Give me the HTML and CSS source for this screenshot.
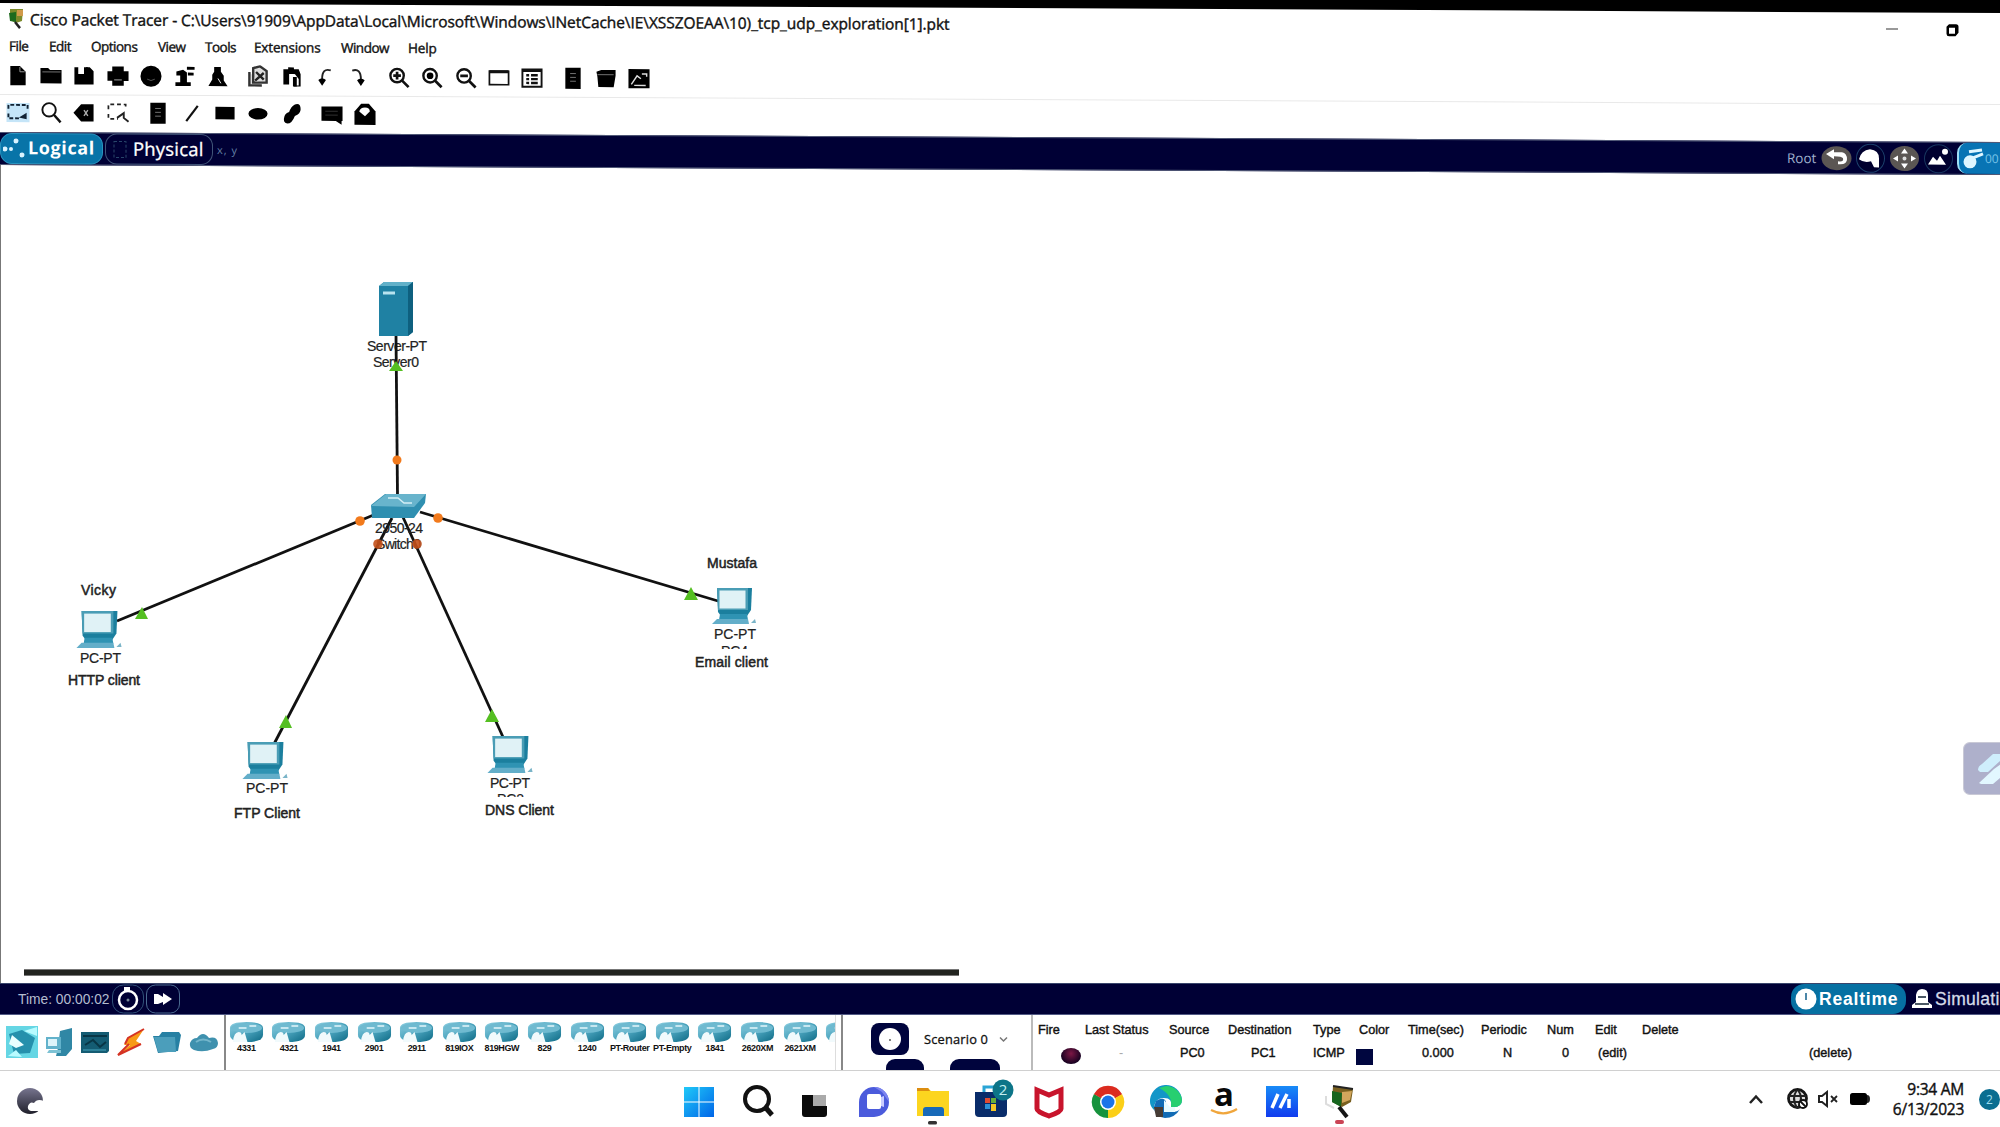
FILE: index.html
```html
<!DOCTYPE html>
<html lang="en">
<head>
<meta charset="utf-8">
<title>Cisco Packet Tracer</title>
<link rel="stylesheet" href="styles.css">
</head>
<body>
<svg class="defs" width="0" height="0">
  <defs>
    <linearGradient id="teal" x1="0" x2="1" y1="0" y2="1"><stop offset="0" stop-color="#8fd0e2"/><stop offset=".5" stop-color="#4aa3bd"/><stop offset="1" stop-color="#0d6a85"/></linearGradient>
    <symbol id="router" viewBox="0 0 36 22" preserveAspectRatio="none"><path d="M1 7Q1 1 18 1T35 7V14Q35 21 18 21T1 14Z" fill="url(#teal)"/><ellipse cx="18" cy="7" rx="16" ry="5" fill="#6fbad0"/><path d="M4 21Q5 11 10 11Q13 11 13 14L16 11L19 21Z" fill="#f1fafc"/><path d="M10 7H18M21 5H28" stroke="#e5f6fa" stroke-width="1.5"/></symbol>
    <symbol id="pc" viewBox="0 0 46 40"><path d="M6 2H41L40 24L36 30H10L7 26Z" fill="#1b7f9e"/><path d="M6 2H37V24H7Z" fill="#4a9db5"/><rect x="8.500" y="4.500" width="26" height="18" fill="#e0f2f6"/><path d="M9 28H36L37 34H8Z" fill="#2f93b3"/><path d="M6 33H37L38 38H1Z" fill="#63aec9"/><path d="M40 37L44 33L45 37Z" fill="#7ab4c8"/></symbol>
  </defs>
</svg>

<header class="head">
  <div class="titlebar">
    <svg class="applogo" width="16" height="22" viewBox="0 0 16 22"><path d="M2 1H15L14 13L8 15L2 12Z" fill="#7c8a2a"/><path d="M1 5L8 4V14L2 13Z" fill="#1d6a1d"/><path d="M9 2H15V8H9Z" fill="#d09a4a"/><path d="M7 14L12 20" stroke="#222" stroke-width="2.5"/></svg>
    <span class="title">Cisco Packet Tracer - C:\Users\91909\AppData\Local\Microsoft\Windows\INetCache\IE\XSSZOEAA\10)_tcp_udp_exploration[1].pkt</span>
    <span class="winbtns">
      <svg width="14" height="14" viewBox="0 0 14 14"><path d="M1 5.500H13" stroke="#777" stroke-width="1.500"/></svg>
      <svg width="15" height="15" viewBox="0 0 15 15"><path d="M4 1.500H11Q13.500 1.500 13.500 4V10L10.500 13.500H4Q1.500 13.500 1.500 11V4Z" fill="#000"/><rect x="4" y="5" width="6" height="6" fill="#fff"/></svg>
    </span>
  </div>
  <nav class="menu"><span class="m1">File</span><span class="m2">Edit</span><span class="m3">Options</span><span class="m4">View</span><span class="m5">Tools</span><span class="m6">Extensions</span><span class="m7">Window</span><span class="m8">Help</span></nav>
  <div class="tools tools-main">
    <div class="group">
      <svg viewBox="0 0 24 24"><path d="M4 2H14L20 8V22H4Z"/><path d="M14 3V8H19" stroke="#999" fill="none"/></svg>
      <svg viewBox="0 0 24 24"><path d="M1 4H9L11 6H23V20H1Z"/><path d="M3 8H22" stroke="#777"/></svg>
      <svg viewBox="0 0 24 24"><path d="M2 3H6V10H12V3H18L22 7V21H2Z"/><path d="M14 3H16V8H14Z"/></svg>
      <svg viewBox="0 0 24 24"><path d="M6 2H18V7H23V17H18V22H6V17H1V7H6Z"/><path d="M8 16H16" stroke="#aaa"/></svg>
      <svg viewBox="0 0 24 24"><circle cx="12" cy="12" r="11"/><path d="M8 15Q12 18 16 15" stroke="#555" fill="none"/></svg>
      <svg viewBox="0 0 24 24"><path d="M3 7L10 5L14 8V18H18V22H2V18H7V11L3 11ZM14 2H22V5H14ZM15 8H21V11H15Z"/></svg>
      <svg viewBox="0 0 24 24"><path d="M8 2H15V7L18 11V16L22 22H2L6 15V10L8 7Z"/><path d="M12 14L15 19" stroke="#fff"/></svg>
    </div>
    <div class="group">
      <svg viewBox="0 0 24 24"><path d="M7 3L14 1L21 6V18H7ZM3 7V21H16" fill="#ddd" stroke="#333" stroke-width="2.500"/><path d="M10 7L18 15M18 8L9 16" stroke="#222" stroke-width="2.500"/></svg>
      <svg viewBox="0 0 24 24"><path d="M3 4H8V2H14V4H19L21 9V22H14V9H9V20H3Z"/><path d="M10 10L15 9L19 14V21H10Z" fill="#fff"/><path d="M13 12H17V22H13Z"/></svg>
      <svg viewBox="0 0 24 24"><path d="M18 5Q9 2 9 14" fill="none" stroke="#222" stroke-width="2"/><path d="M5 15Q9 12 13 15L9 21Z"/></svg>
      <svg viewBox="0 0 24 24"><path d="M6 5Q15 2 15 14" fill="none" stroke="#222" stroke-width="2"/><path d="M11 15Q15 12 19 15L15 21Z"/></svg>
    </div>
    <div class="group">
      <svg viewBox="0 0 24 24"><circle cx="10" cy="10" r="7" fill="none" stroke="#111" stroke-width="2.500"/><path d="M15 15L22 22M10 6V14M6 10H14" stroke="#111" stroke-width="2.800"/></svg>
      <svg viewBox="0 0 24 24"><circle cx="10" cy="10" r="7" fill="none" stroke="#111" stroke-width="2.500"/><path d="M15 15L22 22" stroke="#111" stroke-width="2.800"/><circle cx="10" cy="10" r="3.500"/></svg>
      <svg viewBox="0 0 24 24"><circle cx="10" cy="10" r="7" fill="none" stroke="#111" stroke-width="2.500"/><path d="M15 15L22 22M6 10H14" stroke="#111" stroke-width="2.800"/></svg>
      <svg viewBox="0 0 24 24"><path d="M2 5H22V19H2Z" fill="none" stroke="#111" stroke-width="1.800"/><path d="M2 5.500H22" stroke="#111" stroke-width="3"/></svg>
      <svg viewBox="0 0 24 24"><path d="M2 3H22V21H2Z" fill="none" stroke="#111" stroke-width="2"/><path d="M2 4H22" stroke="#111" stroke-width="3"/><path d="M6 9H9M6 13H9M6 17H9M11 9H18M11 13H18M11 17H18" stroke="#111" stroke-width="2.500"/></svg>
    </div>
    <div class="group">
      <svg viewBox="0 0 24 24"><path d="M4 1H20V23H4Z"/><path d="M9 7H15M9 11H15M9 15H15" stroke="#777"/></svg>
      <svg viewBox="0 0 24 24"><path d="M2 5L7 3H22V9L20 21H4L3 10Z"/><path d="M3 8H20" stroke="#777"/></svg>
      <svg viewBox="0 0 24 24"><path d="M1 2H23V22H1Z"/><path d="M4 18L10 9L14 12M15 7H20V10M7 19H19" fill="none" stroke="#ddd" stroke-width="1.500"/></svg>
    </div>
  </div>
  <div class="tools tools-draw">
    <div class="group">
      <svg viewBox="0 0 24 24"><rect x="0" y="2" width="24" height="20" fill="#c5e5f8"/><path d="M2 8V4H22V8M2 13V18H14" fill="none" stroke="#123" stroke-width="2" stroke-dasharray="4 2"/><path d="M13 17L21 12V19Z" fill="#123"/></svg>
      <svg viewBox="0 0 24 24"><circle cx="10" cy="9" r="7" fill="none" stroke="#111" stroke-width="2"/><path d="M15 14L22 22" stroke="#111" stroke-width="2.500"/></svg>
      <svg viewBox="0 0 24 24"><path d="M1 12L9 3H22V21H9Z"/><path d="M12 9L16 15M16 9L12 15" stroke="#aaa" stroke-width="1.500"/></svg>
      <svg viewBox="0 0 24 24"><path d="M2 8V3H20V8M2 13V18H12" fill="none" stroke="#222" stroke-width="1.800" stroke-dasharray="4 3"/><path d="M11 17L18 12V17L23 21" fill="none" stroke="#222" stroke-width="2"/></svg>
    </div>
    <div class="group">
      <svg viewBox="0 0 24 24"><path d="M4 1H20V23H4Z"/><path d="M9 7H15M9 11H15M9 15H15" stroke="#777"/></svg>
      <svg viewBox="0 0 24 24"><path d="M6 20L18 4" stroke="#111" stroke-width="2.300"/></svg>
      <svg viewBox="0 0 24 24"><rect x="2" y="5" width="20" height="13"/></svg>
      <svg viewBox="0 0 24 24"><ellipse cx="12" cy="12" rx="10" ry="6"/></svg>
      <svg viewBox="0 0 24 24"><path d="M15 2Q21 0 21 7Q21 12 15 14Q12 22 7 22Q2 21 4 15Q5 11 9 10Q11 4 15 2Z"/></svg>
    </div>
    <div class="group">
      <svg viewBox="0 0 24 24"><path d="M1 4H23V19H22V23L16 19H1Z"/><path d="M5 9H18M5 13H18" stroke="#333"/></svg>
      <svg viewBox="0 0 24 24"><path d="M1 9L8 1H16L23 9V23H1Z"/><path d="M6 9Q7 5 12 5Q17 5 17 9L12 14Z" fill="#fff"/></svg>
    </div>
  </div>
  <div class="viewbar">
    <div class="pill logical"><svg width="22" height="24" viewBox="0 0 22 24"><g fill="#d9f3ff"><circle cx="2" cy="12" r="2.500"/><circle cx="8" cy="12" r="2"/><circle cx="13" cy="4" r="2.500"/><circle cx="19" cy="18" r="2.500"/></g></svg><span>Logical</span></div>
    <div class="pill physical"><svg width="14" height="20" viewBox="0 0 14 20"><path d="M1 2H13V18H1Z" fill="none" stroke="#28466a" stroke-dasharray="3 2"/></svg><span>Physical</span></div>
    <span class="coords">x, y</span>
    <div class="viewtools">
      <span class="root">Root</span>
      <svg width="31" height="28" viewBox="0 0 31 28"><ellipse cx="15.500" cy="14" rx="15" ry="12" fill="#5b5653"/><path d="M5 10L13 5V8H21Q26 9 26 15Q26 21 17 20V17Q23 18 22 14Q21 12 13 12V15Z" fill="#fff"/></svg>
      <svg width="33" height="30" viewBox="0 0 33 30"><circle cx="16.500" cy="15" r="14" fill="#00002f" stroke="#1b406c"/><path d="M5 16Q7 7 16 6Q25 7 25 15V24H20L17 18Q10 20 5 16Z" fill="#fff"/></svg>
      <svg width="31" height="28" viewBox="0 0 31 28"><ellipse cx="15.500" cy="14" rx="14.500" ry="12.500" fill="#5b5653"/><path d="M15.500 4L19 9H12ZM15.500 24L12 19H19ZM4 14L9 11V17ZM27 14L22 11V17Z" fill="#fff"/><circle cx="15.500" cy="14" r="2" fill="#ddd"/></svg>
      <svg width="33" height="30" viewBox="0 0 33 30"><circle cx="16.500" cy="15" r="14" fill="#00002f" stroke="#173660"/><path d="M6 21L11 13L15 17L18 12L24 21Z" fill="#fff"/><circle cx="23" cy="8" r="3" fill="#fff"/></svg>
      <div class="clock"><svg width="24" height="26" viewBox="0 0 24 26"><circle cx="9" cy="16" r="6.500" fill="#dff6ff"/><path d="M8 6L21 4M12 12L22 8" stroke="#dff6ff" stroke-width="3"/></svg><span>00</span></div>
    </div>
  </div>
</header>

<main class="workspace">
  <svg class="topology" width="2000" height="818" viewBox="0 165 2000 818">
    <g stroke="#111" stroke-width="2.800" fill="none">
      <path d="M117 621L376 514"/><path d="M274 744L392 518"/><path d="M503 737L402 515"/><path d="M718 601L420 512"/>
    </g>
    <path d="M379 286L384 282H413V332L408 336H379Z" fill="#1f81a3"/><path d="M379 286L384 282H413L408 286Z" fill="#62b1c9"/><path d="M408 286L413 282V332L408 336Z" fill="#0e607f"/><path d="M383 293H395" stroke="#b8e3ef" stroke-width="3"/>
    <g class="label">
      <text x="367" y="351" textLength="60">Server-PT</text><text x="373" y="367" textLength="46">Server0</text>
      <text x="375" y="533" textLength="48">2950-24</text><text x="376" y="549" textLength="45">Switch0</text>
    </g>
    <path d="M396 336L397.500 496" stroke="#111" stroke-width="2.800"/>
    <path d="M371 505L385 494H426L425 503L414 518H372Z" fill="#2f8fb0"/><path d="M371 506L386 494H426L414 507Z" fill="#68b4cc"/><path d="M388 498H398L404 503H412" stroke="#d3eef5" stroke-width="1.500" fill="none"/>
    <g fill="#f27a1c"><circle cx="397" cy="460" r="4.500"/><circle cx="360" cy="521" r="4.800"/><circle cx="438" cy="518" r="4.800"/></g>
    <g fill="#c4501a" opacity=".9"><circle cx="378" cy="544" r="4.800"/><circle cx="417" cy="544" r="4.800"/></g>
    <g fill="#55bf22"><path d="M396 361L403 371H389Z"/><path d="M142 607L148 619H135Z"/><path d="M286 715L292 728H279Z"/><path d="M492 709L499 722H485Z"/><path d="M691 587L698 600H684Z"/></g>
    <use href="#pc" x="75" y="609" width="48" height="41"/><use href="#pc" x="241" y="740" width="48" height="41"/><use href="#pc" x="486" y="734" width="48" height="41"/><use href="#pc" x="710" y="586" width="48" height="40"/>
    <g class="label">
      <text x="80" y="663" textLength="41">PC-PT</text><text x="246" y="793" textLength="42">PC-PT</text><text x="490" y="788" textLength="40">PC-PT</text><text x="714" y="639" textLength="42">PC-PT</text>
    </g>
    <svg x="490" y="793" width="40" height="4"><text class="label" x="7" y="11" textLength="27">PC2</text></svg>
    <svg x="714" y="645" width="40" height="4"><text class="label" x="7" y="11" textLength="27">PC4</text></svg>
    <g class="label note">
      <text x="81" y="595" textLength="35">Vicky</text><text x="68" y="685" textLength="72">HTTP client</text><text x="234" y="818" textLength="66">FTP Client</text><text x="485" y="815" textLength="69">DNS Client</text><text x="707" y="568" textLength="50">Mustafa</text><text x="695" y="667" textLength="73">Email client</text>
    </g>
  </svg>
  <div class="scroll"></div>
  <div class="floater"><svg width="37" height="53" viewBox="0 0 37 53"><path d="M14 27Q14 23 18 21L29 11H37V17L24 29H16Z" fill="#cfeefc"/><path d="M15 40L30 26L37 21V34L29 41H17Z" fill="#e2f7ff"/></svg></div>
</main>

<div class="timebar">
  <span class="time">Time: 00:00:02</span>
  <svg width="32" height="30" viewBox="0 0 32 30"><rect x=".5" y="1" width="31" height="28" rx="11" fill="none" stroke="#2f5078"/><circle cx="16" cy="16" r="9" fill="none" stroke="#fff" stroke-width="2.500"/><path d="M12 3H18V7H12Z" fill="#fff"/><circle cx="16" cy="16" r="1.500" fill="#789"/></svg>
  <svg width="34" height="30" viewBox="0 0 34 30"><rect x=".5" y="1" width="33" height="28" rx="9" fill="none" stroke="#4a6a90"/><path d="M8 10H12L17 13V9L26 15L17 21V18L12 20H8Z" fill="#fff"/></svg>
  <div class="modes">
    <div class="realtime"><svg width="22" height="24" viewBox="0 0 22 24"><circle cx="11" cy="12" r="10.500" fill="#fff"/><path d="M11 6V13" stroke="#4c87a8" stroke-width="2"/></svg><span>Realtime</span></div>
    <div class="simulation"><svg width="22" height="24" viewBox="0 0 22 24"><path d="M5 15V8Q6 2 11 2Q17 2 17 8V15L21 18V21H1V18Z" fill="#fff"/><path d="M7 10H15M4 17H18" stroke="#123" stroke-width="1.500"/></svg><span>Simulation</span></div>
  </div>
</div>

<div class="dock">
  <div class="cats">
    <svg width="32" height="32" viewBox="0 0 32 32"><path d="M0 0H32V32H0Z" fill="#65d6e4"/><path d="M3 8L16 4L29 12L24 27L8 28Z" fill="#2590ac"/><path d="M3 18L6 9L18 19L10 22Z" fill="#eaffff"/><path d="M18 5L31 1V10ZM2 30L10 24L16 31Z" fill="#b8fbff"/></svg>
    <svg width="30" height="32" viewBox="0 0 30 32"><path d="M16 5L28 2V23L22 30H12L14 22Z" fill="#3087a5"/><path d="M2 11H17V23H2Z" fill="#62b2cb"/><path d="M4 13H13V20H4Z" fill="#ddf4fa"/><path d="M5 24H17V27H3Z" fill="#7dc2d4"/></svg>
    <svg width="30" height="26" viewBox="0 0 30 26"><path d="M1 3H29V22L27 24H1Z" fill="#145c73"/><path d="M3 7H27M5 16L13 11L20 18L26 13" stroke="#083646" stroke-width="2" fill="none"/><path d="M3 21H26" stroke="#2d8199" stroke-width="2"/></svg>
    <svg width="30" height="30" viewBox="0 0 30 30"><path d="M28 2L13 10L8 18H14L2 28L25 17L20 14Z" fill="#f89a16"/><path d="M28 2L12 11L9 17M25 17L2 28L13 17" fill="none" stroke="#d53324" stroke-width="2"/></svg>
    <svg width="30" height="26" viewBox="0 0 30 26"><path d="M1 7H7L10 3H27L29 6L26 22L6 24Z" fill="#2680a3"/><path d="M2 8H23L24 23H6Z" fill="#4b9ebb"/></svg>
    <svg width="32" height="24" viewBox="0 0 32 24"><path d="M6 20Q1 18 2 13Q4 8 9 8Q15 0 21 8Q29 6 30 13Q30 18 25 19Q15 23 6 20Z" fill="#3f91ae"/><path d="M8 12Q15 7 23 12" stroke="#74b6cb" stroke-width="2" fill="none"/></svg>
  </div>
  <div class="models">
    <div><svg><use href="#router"/></svg><b>4331</b></div><div><svg><use href="#router"/></svg><b>4321</b></div><div><svg><use href="#router"/></svg><b>1941</b></div><div><svg><use href="#router"/></svg><b>2901</b></div><div><svg><use href="#router"/></svg><b>2911</b></div><div><svg><use href="#router"/></svg><b>819IOX</b></div><div><svg><use href="#router"/></svg><b>819HGW</b></div><div><svg><use href="#router"/></svg><b>829</b></div><div><svg><use href="#router"/></svg><b>1240</b></div><div><svg><use href="#router"/></svg><b>PT-Router</b></div><div><svg><use href="#router"/></svg><b>PT-Empty</b></div><div><svg><use href="#router"/></svg><b>1841</b></div><div><svg><use href="#router"/></svg><b>2620XM</b></div><div><svg><use href="#router"/></svg><b>2621XM</b></div><div><svg><use href="#router"/></svg></div>
  </div>
  <div class="scenario">
    <div class="scenario-top">
      <svg width="38" height="32" viewBox="0 0 38 32"><rect width="38" height="32" rx="8" fill="#00043d"/><ellipse cx="19" cy="16" rx="11" ry="11" fill="#fff"/><circle cx="19" cy="17" r="1" fill="#555"/></svg>
      <span class="scenario-name">Scenario 0</span>
      <svg width="9" height="7" viewBox="0 0 9 7"><path d="M1 1.500L4.500 5L8 1.500" stroke="#777" stroke-width="1.500" fill="none"/></svg>
    </div>
    <div class="scenario-btns"><i class="b1"></i><i class="b2"></i></div>
  </div>
  <div class="pdu">
    <div class="row"><span>Fire</span><span>Last Status</span><span>Source</span><span>Destination</span><span>Type</span><span>Color</span><span>Time(sec)</span><span>Periodic</span><span>Num</span><span>Edit</span><span>Delete</span></div>
    <div class="row values"><span><i class="fire"></i></span><span class="dash">-</span><span>PC0</span><span>PC1</span><span>ICMP</span><span><i class="swatch"></i></span><span>0.000</span><span>N</span><span>0</span><span>(edit)</span><span>(delete)</span></div>
  </div>
</div>

<footer class="taskbar">
  <svg class="weather" width="28" height="28" viewBox="0 0 28 28"><defs><linearGradient id="moon" x1="0" x2="0" y1="0" y2="1"><stop offset="0" stop-color="#77758f"/><stop offset="1" stop-color="#20202b"/></linearGradient></defs><circle cx="14" cy="14" r="13" fill="url(#moon)"/><path d="M12 19Q14 14 18 16Q21 11 28 14V24H15Q11 23 12 19Z" fill="#fff"/></svg>
  <div class="apps">
    <svg viewBox="0 0 40 50"><defs><linearGradient id="win" x1="0" x2="1" y1="0" y2="1"><stop offset="0" stop-color="#20c9f8"/><stop offset="1" stop-color="#0065e8"/></linearGradient></defs><path d="M5 9H19.500V23.500H5ZM20.500 9H35V23.500H20.500ZM5 24.500H19.500V39H5ZM20.500 24.500H35V39H20.500Z" fill="url(#win)"/></svg>
    <svg viewBox="0 0 40 50"><circle cx="20" cy="21" r="12" fill="none" stroke="#111" stroke-width="4"/><path d="M29 30L35 37" stroke="#111" stroke-width="5"/></svg>
    <svg viewBox="0 0 40 50"><path d="M17 17H30V30H17Z" fill="#aaa"/><path d="M6 17H17V28H31V36Q31 39 28 39H9Q6 39 6 36Z" fill="#0b0b0b"/></svg>
    <svg viewBox="0 0 40 50"><path d="M5 39V24A15 15 0 1 1 20 39Z" fill="#4b5bdc"/><path d="M20 9A15 15 0 0 1 35 24L28 14Z" fill="#7c84f0"/><rect x="13" y="16" width="14" height="15" rx="2" fill="#fff"/><path d="M27 19L30 18V29L27 28Z" fill="#c9ccff"/></svg>
    <svg viewBox="0 0 40 50"><path d="M4 10H15L18 13H36V38H4Z" fill="#fcd51f"/><path d="M4 10H15L17 13H4Z" fill="#dc8d10"/><path d="M10 38V32Q10 29 13 29H28Q31 29 31 32V38Z" fill="#1769b8"/><rect x="15" y="43" width="9" height="3.500" rx="1.500" fill="#333"/></svg>
    <svg viewBox="0 0 40 50"><path d="M13 16V9H27V16" fill="none" stroke="#2aa5d6" stroke-width="3"/><path d="M4 14H36V35Q36 39 32 39H8Q4 39 4 35Z" fill="#092c6a"/><path d="M14 20H19V25H14Z" fill="#e14b31"/><path d="M20 20H25V25H20Z" fill="#69ae3b"/><path d="M14 26H19V31H14Z" fill="#2b90d7"/><path d="M20 26H25V33H20Z" fill="#f5c624"/><circle cx="32" cy="12" r="10.500" fill="#0d7588"/><text x="32" y="17" text-anchor="middle" class="badge">2</text></svg>
    <svg viewBox="0 0 40 50"><path d="M8 12L20 17L32 12V31Q32 34 20 38Q8 34 8 31Z" fill="none" stroke="#c8142c" stroke-width="5"/></svg>
    <svg viewBox="0 0 40 50"><path d="M20 24L6 16A16 16 0 0 1 34 16Z" fill="#db2b1f"/><path d="M20 24L34 16A16 16 0 0 1 20 40Z" fill="#fbcf17"/><path d="M20 24V40A16 16 0 0 1 6 16Z" fill="#16923d"/><path d="M6 16H34L20 24Z" fill="#db2b1f"/><circle cx="20" cy="24" r="8" fill="#fff"/><circle cx="20" cy="24" r="6.500" fill="#1a73e8"/></svg>
    <svg viewBox="0 0 40 50"><path d="M4 24A16 16 0 0 1 36 22Q36 30 25 29Q27 20 18 20Q8 20 8 32Q4 28 4 24Z" fill="#1296c8"/><path d="M20 8A16 16 0 0 1 36 22Q36 30 25 29Q27 17 13 10Z" fill="#27cf70"/><path d="M10 23Q18 18 20 24Q17 32 26 34Q32 34 34 31Q29 40 19 40Q8 38 8 29Z" fill="#116bb5"/><path d="M8 29H17V39H10Z" fill="#463c35"/><path d="M18 22L24 29H29V34H18Z" fill="#e8fbff"/></svg>
    <svg viewBox="0 0 40 50"><text x="19" y="28" text-anchor="middle" class="amazon">a</text><path d="M6 32Q19 39 32 31" stroke="#f0a63c" stroke-width="2.200" fill="none"/></svg>
    <svg viewBox="0 0 40 50"><defs><linearGradient id="mm" x1="0" x2="0" y1="0" y2="1"><stop offset="0" stop-color="#188bf7"/><stop offset="1" stop-color="#113bee"/></linearGradient></defs><path d="M3 8H35V39H3Z" fill="url(#mm)"/><path d="M9 30L15 16M17 30L24 16M26 21V30" stroke="#fff" stroke-width="3.500"/></svg>
    <svg viewBox="0 0 40 50"><path d="M12 8L32 11L30 24L21 29L11 24Z" fill="#796020"/><path d="M11 13L21 15L20 29L11 24Z" fill="#16651f"/><path d="M21 14L31 13L29 22L21 25Z" fill="#d2a65c"/><path d="M12 8L32 11" stroke="#222" stroke-width="2"/><path d="M5 18V26L13 30" stroke="#ddd" stroke-width="2" fill="none"/><path d="M18 29L26 39" stroke="#161616" stroke-width="4"/><rect x="14" y="42" width="9" height="4" rx="2" fill="#ca4354"/></svg>
  </div>
  <div class="tray">
    <svg class="t-up" width="16" height="12" viewBox="0 0 16 12"><path d="M2 10L8 3.500L14 10" stroke="#222" stroke-width="2.500" fill="none"/></svg>
    <svg class="t-net" width="22" height="22" viewBox="0 0 22 22"><circle cx="10.500" cy="10.500" r="9" fill="#ddd" stroke="#151515" stroke-width="2.800"/><path d="M2 8H19M3 14H18M10 2Q4 10 10 20M11 2Q17 10 11 20" stroke="#222" stroke-width="2" fill="none"/><circle cx="16" cy="16" r="4" fill="#fff" stroke="#111" stroke-width="1.800"/><path d="M13 13L19 19" stroke="#111" stroke-width="1.800"/></svg>
    <svg class="t-vol" width="22" height="18" viewBox="0 0 22 18"><path d="M2 6H5L10 2V16L5 12H2Z" fill="none" stroke="#222" stroke-width="2"/><path d="M14 6L20 12M20 6L14 12" stroke="#222" stroke-width="1.800"/></svg>
    <svg class="t-bat" width="22" height="14" viewBox="0 0 22 14"><rect x="1" y="1" width="17" height="12" rx="2.500" fill="#000"/><path d="M18 3Q21 3 21 7Q21 11 18 11Z" fill="#222"/></svg>
    <div class="datetime"><span>9:34 AM</span><span>6/13/2023</span></div>
    <span class="notify">2</span>
  </div>
</footer>
</body>
</html>
```
FILE: styles.css
```css
* { box-sizing: border-box; }
html, body { margin: 0; }
body { width: 2000px; height: 1127px; overflow: hidden; background: #000; font-family: "Open Sans", "Noto Sans", sans-serif; color: #111; padding-top: 3px; display: flex; flex-direction: column; }
.defs { display: block; height: 0; flex: none; }
svg { flex: none; }

.head { position: relative; z-index: 1; height: 162px; flex: none; background: #fff; transform: skewY(.286deg); transform-origin: 0 0; white-space: nowrap; }
.titlebar { height: 32px; display: flex; align-items: center; padding: 0 40px 0 8px; }
.title { margin-left: 6px; font-size: 15.500px; letter-spacing: -.07px; -webkit-text-stroke: .4px #111; }
.winbtns { margin-left: auto; padding-top: 3px; display: flex; align-items: center; gap: 46px; }
.menu { height: 22px; display: flex; align-items: center; padding-left: 9px; font-size: 13.500px; letter-spacing: -.5px; -webkit-text-stroke: .4px #111; }
.m1 { width: 40px; } .m2 { width: 42px; } .m3 { width: 67px; } .m4 { width: 47px; } .m5 { width: 49px; } .m6 { width: 87px; } .m7 { width: 67px; }
.m6, .m8 { letter-spacing: -.15px; }
.tools { display: flex; align-items: center; gap: 7px; padding-left: 1px; }
.tools-main { height: 38px; border-bottom: 1px solid #e9e9e9; padding-bottom: 1px; }
.tools-draw { height: 37px; padding-bottom: 2px; }
.group { display: flex; }
.group svg { width: 24px; height: 23px; margin: 0 4.700px; }
.viewbar { height: 33px; background: #000035; border-top: 1px solid #525a78; border-bottom: 1px solid #525a78; display: flex; align-items: center; color: #fff; }
.pill { height: 31px; display: flex; align-items: center; border-radius: 12px; font-size: 18px; }
.pill span { margin-top: -3px; }
.logical { width: 103px; background: #0874a8; border: 1px solid #2994bf; padding-left: 2px; font-weight: 700; gap: 3px; font-size: 18px; letter-spacing: .6px; }
.physical { width: 108px; margin-left: 2px; border: 1px solid #405478; padding-left: 7px; gap: 6px; font-weight: 500; font-size: 18.500px; letter-spacing: .2px; -webkit-text-stroke: .3px #fff; }
.coords { margin-left: 4px; font-size: 11px; letter-spacing: 1px; color: #6480a6; }
.viewtools { margin-left: auto; display: flex; align-items: center; gap: 2px; }
.root { font-size: 13.500px; color: #9fb0cc; margin-right: 3px; width: 29px; }
.clock { width: 43px; height: 31px; padding-left: 2px; background: #0874b4; border-left: 2px solid #9edff5; border-radius: 10px 0 0 10px; display: flex; align-items: center; overflow: hidden; font-size: 12px; color: #78c4e8; }

.workspace { position: relative; height: 818px; flex: none; background: #fff; border-left: 1px solid #777; }
.topology { display: block; margin-left: -1px; }
.label { font: 14px "Liberation Sans", Arial, sans-serif; fill: #222; stroke: #222; stroke-width: .2px; }
.note { stroke-width: .5px; }
.scroll { position: absolute; left: 23px; top: 804px; width: 935px; height: 7px; background: #22241f; border-top: 1px solid #777; border-bottom: 1px solid #777; }
.floater { position: absolute; right: 0; top: 577px; width: 37px; height: 53px; background: #aeb0cb; border: 1px solid #c9c9d6; border-right: 0; border-radius: 7px 0 0 7px; overflow: hidden; }

.timebar { height: 32px; flex: none; background: #000035; border-top: 1px solid #39456b; border-bottom: 1px solid #525a85; display: flex; align-items: center; padding-left: 18px; color: #fff; overflow: hidden; }
.time { width: 94px; font: 13.800px "Liberation Sans", Arial, sans-serif; color: #b4bdcf; white-space: nowrap; }
.timebar > svg + svg { margin-left: 2px; }
.modes { margin-left: auto; width: 209px; height: 30px; display: flex; }
.realtime { width: 115px; flex: none; display: flex; align-items: center; background: #0670a2; border-radius: 13px; padding-left: 4px; gap: 2px; font: bold 17.500px "Liberation Sans", Arial, sans-serif; letter-spacing: .8px; }
.simulation { flex: none; display: flex; align-items: center; margin-left: 5px; font: 17.500px "Liberation Sans", Arial, sans-serif; color: #d5dbe8; letter-spacing: .3px; -webkit-text-stroke: .3px #d5dbe8; }
.simulation span { padding-left: 2px; }

.dock { height: 56px; flex: none; background: #fff; display: flex; border-bottom: 1px solid #d0d0d0; }
.cats { width: 226px; border-right: 2px solid #888; display: flex; align-items: center; gap: 6px; padding-left: 6px; padding-bottom: 2px; }
.models { width: 610px; border-right: 1px solid #ddd; display: flex; overflow: hidden; }
.models div { width: 42.600px; flex: none; padding: 6px 2px 0 0; display: flex; flex-direction: column; align-items: center; }
.models svg { width: 35px; height: 22px; }
.models b { font: bold 9px/10px "Liberation Sans", Arial, sans-serif; letter-spacing: -.4px; }
.scenario { margin-left: 5px; width: 192px; border-left: 2px solid #888; border-right: 2px solid #bbb; display: flex; flex-direction: column; justify-content: space-between; }
.scenario-top { display: flex; align-items: center; padding: 8px 0 0 28px; }
.scenario-name { margin: 0 9px 0 15px; width: 66px; font-size: 12.800px; letter-spacing: .2px; white-space: nowrap; -webkit-text-stroke: .3px #111; }
.scenario-btns { display: flex; gap: 26px; padding-left: 43px; }
.scenario-btns i { height: 11px; background: #00043d; border-radius: 9px 9px 0 0; }
.b1 { width: 38px; } .b2 { width: 50px; }
.pdu { padding: 4px 0 0 5px; font: 12.700px "Liberation Sans", Arial, sans-serif; -webkit-text-stroke: .4px #111; }
.row { display: grid; grid-template-columns: 47px 84px 59px 85px 46px 49px 73px 66px 48px 47px 210px; height: 22px; align-items: center; white-space: nowrap; }
.values { height: 21px; }
.values .dash { padding-left: 34px; color: #aaa; -webkit-text-stroke: 0; }
.values span:nth-child(3) { padding-left: 11px; }
.values span:nth-child(4) { padding-left: 23px; }
.values span:nth-child(7) { padding-left: 14px; }
.values span:nth-child(8) { padding-left: 22px; }
.values span:nth-child(9) { padding-left: 15px; }
.values span:nth-child(10) { padding-left: 3px; }
.values span:nth-child(11) { padding-left: 167px; }
.row i { display: block; }
.fire { width: 20px; height: 16px; margin: 6px 0 0 23px; border-radius: 50%; background: radial-gradient(circle at 50% 35%, #7c1745, #12001f 75%); }
.swatch { width: 17px; height: 16px; margin: 8px 0 0 -3px; background: #00063f; }

.taskbar { height: 56px; flex: none; background: #fff; display: flex; align-items: center; padding-left: 16px; }
.weather { margin-top: 4px; }
.apps { margin-left: 635px; display: flex; gap: 18.400px; align-self: flex-start; padding-top: 7px; }
.apps svg { width: 40px; height: 50px; overflow: visible; }
.badge { font: 15px "Open Sans", sans-serif; fill: #c2f0f1; }
.amazon { font: bold 33px "Open Sans", sans-serif; fill: #080808; }
.tray { margin-left: auto; display: flex; align-items: center; }
.t-net { margin-left: 23px; } .t-vol { margin-left: 8px; } .t-bat { margin-left: 10px; }
.datetime { width: 93px; display: flex; flex-direction: column; text-align: right; font-size: 15.500px; line-height: 20px; letter-spacing: -.25px; margin-top: -1px; -webkit-text-stroke: .4px #111; }
.notify { margin-left: 15px; width: 21px; height: 21px; border-radius: 50%; background: #0b6e91; color: #9edff0; font-size: 12px; line-height: 21px; text-align: center; }
```
